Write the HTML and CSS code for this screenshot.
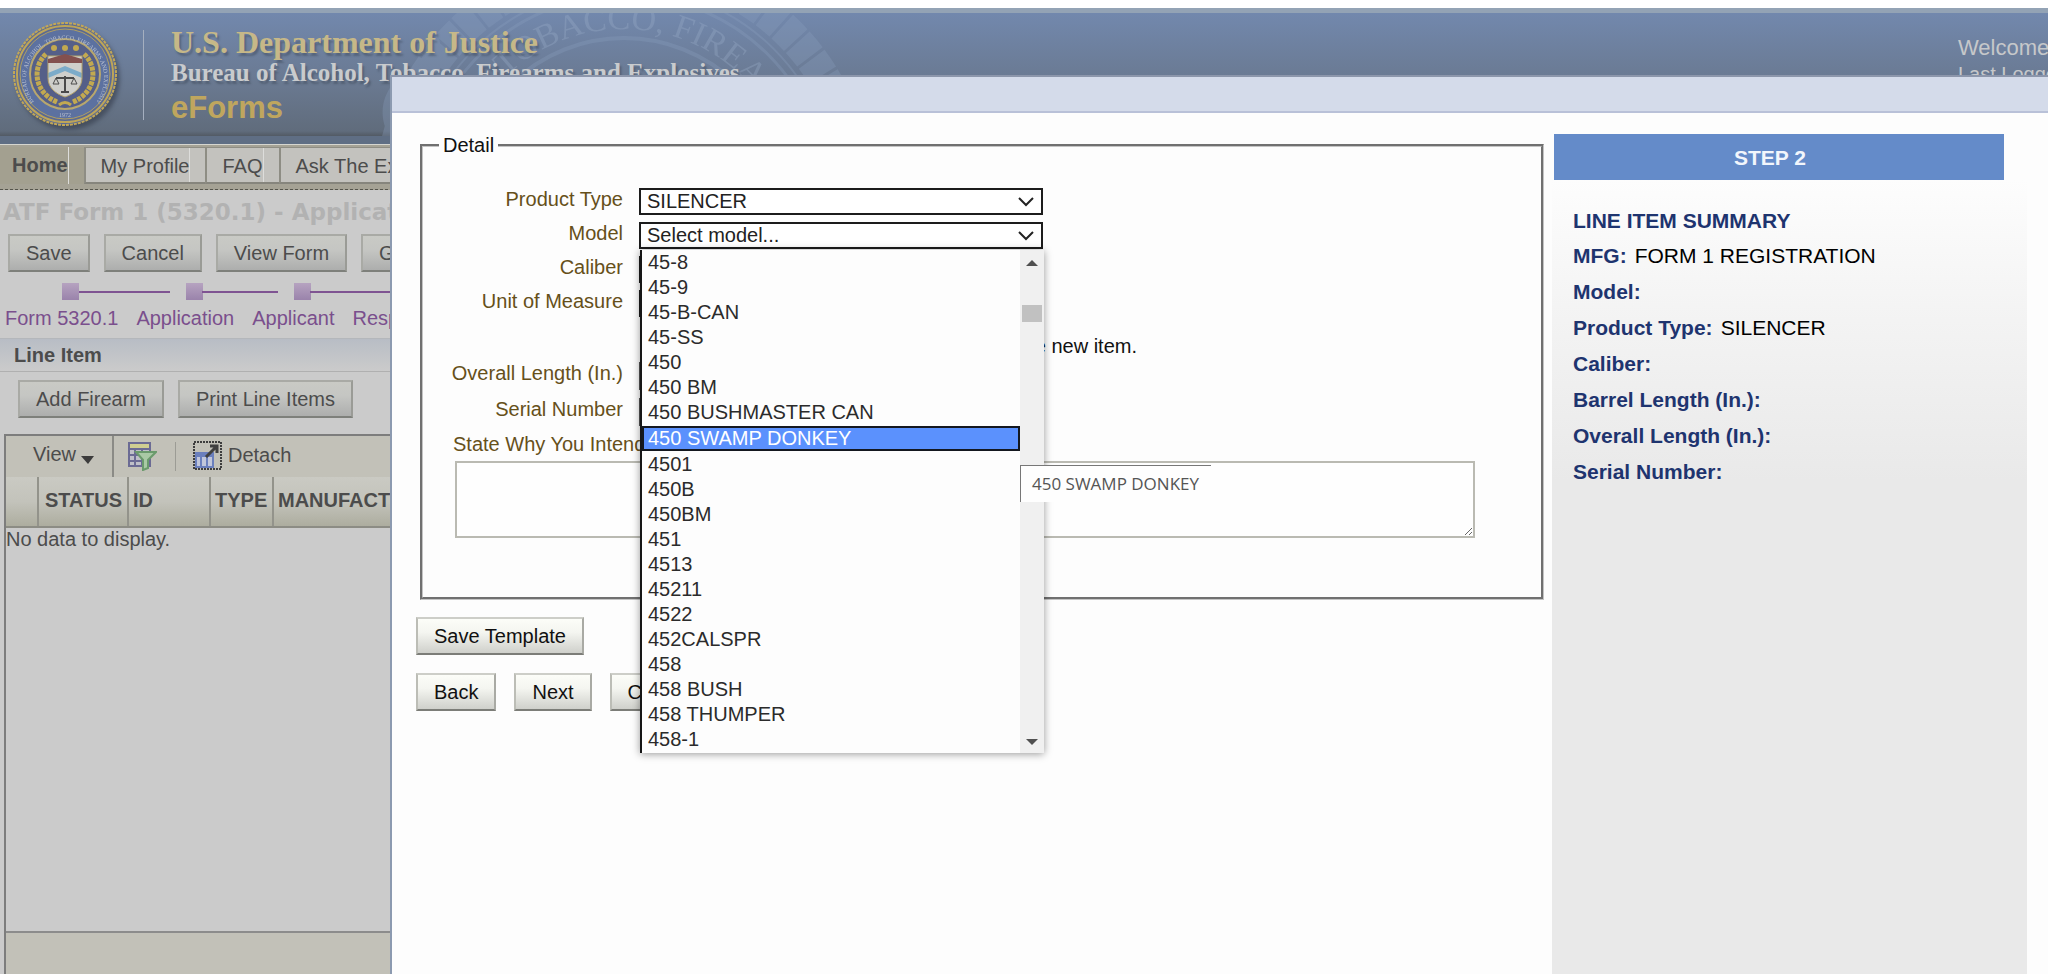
FILE: index.html
```html
<!DOCTYPE html>
<html lang="en">
<head>
<meta charset="UTF-8">
<meta name="viewport" content="width=device-width, initial-scale=1.0">
<title>ATF eForms - ATF Form 1 (5320.1)</title>
<link rel="stylesheet" href="styles.css">
</head>
<body>
<header class="banner">
    <svg class="watermark" width="560" height="124" viewBox="0 0 560 124" aria-hidden="true">
        <defs>
            <path id="ringText" d="M74 186 A170 170 0 0 1 414 186"/>
        </defs>
        <g fill="none" stroke="#8ba0bf">
            <circle cx="244" cy="186" r="161" stroke-width="4"/>
            <circle cx="244" cy="186" r="204" stroke-width="3"/>
            <circle cx="244" cy="186" r="212" stroke-width="2"/>
            <circle cx="244" cy="186" r="234" stroke-width="32" stroke-dasharray="19 3"/>
        </g>
        <path fill="#8ba0bf" d="M10 124 C-2 105 2 85 12 72 C22 92 28 108 24 124Z M38 92 C30 66 40 40 58 22 C66 48 60 74 38 92Z"/>
        <text class="ring-text"><textPath href="#ringText" startOffset="136">TOBACCO, FIREARMS</textPath></text>
    </svg>
    <svg class="seal" width="108" height="108" viewBox="0 0 108 108" role="img" aria-label="ATF seal">
        <defs>
            <path id="sealText" d="M23 82 A39 39 0 1 1 85 82"/>
            <clipPath id="shieldClip"><path d="M37 36H71V58C71 68 63 74 54 77C45 74 37 68 37 58Z"/></clipPath>
        </defs>
        <circle cx="54" cy="54" r="51" fill="#5c6b92" stroke="#c2a757" stroke-width="2" stroke-dasharray="3 1"/>
        <circle cx="54" cy="54" r="48" fill="#5b6992" stroke="#bda558" stroke-width="2"/>
        <circle cx="54" cy="54" r="45" fill="#5c71a0" stroke="#b09f62"/>
        <circle cx="54" cy="54" r="35" fill="#555f88" stroke="#b8a76d" stroke-width="2"/>
        <text class="seal-text"><textPath href="#sealText">BUREAU OF ALCOHOL, TOBACCO, FIREARMS AND EXPLOSIVES</textPath></text>
        <text class="seal-text" x="54" y="97" text-anchor="middle">1972</text>
        <g fill="none" stroke="#c2a950" stroke-width="5" stroke-dasharray="4 1">
            <path d="M35 34C20 48 24 73 46 82"/>
            <path d="M73 34C88 48 84 73 62 82"/>
        </g>
        <path d="M48 85q6 -5 12 0" fill="none" stroke="#c2a950" stroke-width="3"/>
        <g fill="#c2a950">
            <circle cx="43" cy="28" r="3"/><circle cx="54" cy="28" r="3"/><circle cx="65" cy="28" r="3"/>
        </g>
        <g clip-path="url(#shieldClip)">
            <path fill="#cfcfcb" d="M37 36h34v42H37z"/>
            <path fill="#7cabc9" d="M37 53L54 46L71 53V58L54 51L37 58Z"/>
        </g>
        <path d="M37 36H71V58C71 68 63 74 54 77C45 74 37 68 37 58Z" fill="none" stroke="#b3a269"/>
        <path d="M37 43V39L54 34L71 39V43Z" fill="#83504f"/>
        <path d="M45 58H63M54 56V71M50 72H58" fill="none" stroke="#4a4a4a" stroke-width="2"/>
        <path d="M45 58L42 64H48ZM63 58L60 64H66Z" fill="none" stroke="#4a4a4a"/>
    </svg>
    <div class="agency">
        <div class="department">U.S. Department of Justice</div>
        <div class="bureau">Bureau of Alcohol, Tobacco, Firearms and Explosives</div>
        <div class="eforms">eForms</div>
    </div>
    <div class="welcome">
        <div>Welcome</div>
        <div class="last-login">Last Logged</div>
    </div>
</header>

<nav class="tabs">
    <a class="tab active" href="#"><span>Home</span></a>
    <a class="tab" href="#"><span>My Profile</span></a>
    <a class="tab" href="#"><span>FAQ</span></a>
    <a class="tab" href="#"><span>Ask The Experts</span></a>
</nav>

<main class="page">
    <h1>ATF Form 1 (5320.1) - Application</h1>
    <div class="actions">
        <button type="button">Save</button>
        <button type="button">Cancel</button>
        <button type="button">View Form</button>
        <button type="button">Generate</button>
    </div>
    <ol class="train">
        <li><i class="stop"></i><a href="#">Form 5320.1</a></li>
        <li><i class="stop"></i><a href="#">Application</a></li>
        <li><i class="stop"></i><a href="#">Applicant</a></li>
        <li><i class="stop"></i><a href="#">Responsible</a></li>
    </ol>
    <h2>Line Item</h2>
    <div class="actions line-actions">
        <button type="button">Add Firearm</button>
        <button type="button">Print Line Items</button>
    </div>
    <section class="grid-panel">
        <div class="toolbar">
            <button type="button" class="view-menu">View
                <svg width="14" height="8" viewBox="0 0 14 8"><path d="M0 0H13L7 8Z" fill="#3c3c3c"/></svg>
            </button>
            <button type="button" class="icon-button" aria-label="Filter">
                <svg width="29" height="29" viewBox="0 0 29 29">
                    <path d="M1 1H22V24H1Z" fill="#bfc0c8" stroke="#6b6b94" stroke-width="2"/>
                    <path d="M2 2H21V6H2Z" fill="#cfce92"/>
                    <path d="M1 7H22M1 13H22M1 19H22M7 7V24M14 7V24" stroke="#6b6b94" stroke-width="2"/>
                    <path d="M8 10H28L20 18V26L15 28V18Z" fill="#a9c9a5" stroke="#6a9a6c" stroke-width="2"/>
                </svg>
            </button>
            <button type="button" class="icon-button detach">
                <svg width="29" height="29" viewBox="0 0 29 29">
                    <path d="M1 1H28V28H1Z" fill="none" stroke="#3d3d3d" stroke-width="2" stroke-dasharray="2 1"/>
                    <path d="M3 12H20V26H3Z" fill="#c0c6da" stroke="#6a7fbd" stroke-width="2"/>
                    <path d="M3 12H20V16H3Z" fill="#6a7fbd"/>
                    <path d="M8 16V26M14 16V26" stroke="#6a7fbd" stroke-width="2"/>
                    <path d="M13 16L23 6M17 5H24V12" fill="none" stroke="#404040" stroke-width="3"/>
                </svg>
                Detach
            </button>
        </div>
        <table>
            <colgroup><col class="c-sel"><col class="c-status"><col class="c-id"><col class="c-type"><col></colgroup>
            <thead>
                <tr><th></th><th class="status">STATUS</th><th>ID</th><th>TYPE</th><th>MANUFACTURER</th></tr>
            </thead>
            <tbody>
                <tr><td colspan="5">No data to display.</td></tr>
            </tbody>
        </table>
        <div class="panel-footer"></div>
    </section>
</main>

<div class="dialog" role="dialog" aria-label="Line item">
    <div class="dialog-title"></div>
    <div class="dialog-body">
        <form class="detail-form">
            <fieldset>
                <legend>Detail</legend>
                <div class="fields">
                    <label for="productType">Product Type</label>
                    <select id="productType"><option>SILENCER</option></select>
                    <label for="model">Model</label>
                    <div class="combo">
                        <select id="model"><option>Select model...</option></select>
                        <div class="dropdown">
                            <ul role="listbox" aria-label="Model">
                                <li role="option">45-8</li>
                                <li role="option">45-9</li>
                                <li role="option">45-B-CAN</li>
                                <li role="option">45-SS</li>
                                <li role="option">450</li>
                                <li role="option">450 BM</li>
                                <li role="option">450 BUSHMASTER CAN</li>
                                <li role="option" class="selected" aria-selected="true">450 SWAMP DONKEY</li>
                                <li role="option">4501</li>
                                <li role="option">450B</li>
                                <li role="option">450BM</li>
                                <li role="option">451</li>
                                <li role="option">4513</li>
                                <li role="option">45211</li>
                                <li role="option">4522</li>
                                <li role="option">452CALSPR</li>
                                <li role="option">458</li>
                                <li role="option">458 BUSH</li>
                                <li role="option">458 THUMPER</li>
                                <li role="option">458-1</li>
                            </ul>
                            <div class="scrollbar">
                                <svg width="12" height="6" viewBox="0 0 12 6"><path d="M0 6L6 0L12 6Z" fill="#505050"/></svg>
                                <div class="thumb"></div>
                                <svg width="12" height="6" viewBox="0 0 12 6"><path d="M0 0H12L6 6Z" fill="#505050"/></svg>
                            </div>
                            <div class="tooltip" role="tooltip">450 SWAMP DONKEY</div>
                        </div>
                    </div>
                    <label for="caliber">Caliber</label>
                    <select id="caliber"></select>
                    <label for="unit">Unit of Measure</label>
                    <select id="unit"></select>
                </div>
                <p class="note">Create the new item.</p>
                <div class="fields lengths">
                    <label for="overallLength">Overall Length (In.)</label>
                    <input type="text" id="overallLength">
                    <label for="serialNumber">Serial Number</label>
                    <input type="text" id="serialNumber">
                </div>
                <label class="reason-label" for="reason">State Why You Intend To Make Firearm</label>
                <textarea id="reason"></textarea>
            </fieldset>
            <div class="actions">
                <button type="button">Save Template</button>
            </div>
            <div class="actions">
                <button type="button">Back</button>
                <button type="button">Next</button>
                <button type="button">Cancel</button>
            </div>
        </form>
        <aside class="summary">
            <div class="step">STEP 2</div>
            <div class="summary-body">
                <h3>LINE ITEM SUMMARY</h3>
                <dl>
                    <div><dt>MFG:</dt><dd>FORM 1 REGISTRATION</dd></div>
                    <div><dt>Model:</dt></div>
                    <div><dt>Product Type:</dt><dd>SILENCER</dd></div>
                    <div><dt>Caliber:</dt></div>
                    <div><dt>Barrel Length (In.):</dt></div>
                    <div><dt>Overall Length (In.):</dt></div>
                    <div><dt>Serial Number:</dt></div>
                </dl>
            </div>
        </aside>
    </div>
</div>
</body>
</html>
```
FILE: styles.css
```css
* {
    box-sizing: border-box;
}
body {
    margin: 0;
    padding-top: 8px;
    height: 100vh;
    overflow: hidden;
    position: relative;
    display: flex;
    flex-direction: column;
    background-color: #fff;
    font-family: "Liberation Sans", Arial, sans-serif;
    font-size: 20px;
    line-height: 23px;
    color: #4c4c4c;
}
button, select, input, textarea {
    font: inherit;
    color: inherit;
}

/* Banner */
.banner {
    position: relative;
    flex: none;
    display: flex;
    height: 136px;
    overflow: hidden;
    border-top: 5px solid #93a3b5;
    border-bottom: 8px solid #5f6e84;
    background: linear-gradient(#7288ad, #69788f 60%, #606c7c 96%, #525a64);
}
.watermark {
    position: absolute;
    left: 380px;
    top: 0;
    opacity: 0.3;
}
.ring-text {
    font-family: "Liberation Serif", serif;
    font-size: 34px;
    fill: #9fb2cd;
}
.seal {
    position: relative;
    margin: 7px 0 0 11px;
    border-radius: 50%;
    filter: drop-shadow(3px 4px 2px rgba(40, 45, 60, 0.5));
}
.seal-text {
    font-family: "Liberation Serif", serif;
    font-size: 6px;
    fill: #b9c0cf;
}
.agency {
    position: relative;
    height: 90px;
    margin: 17px 0 0 24px;
    padding-left: 27px;
    border-left: 1px solid #a5afbf;
    font-family: "Liberation Serif", "Times New Roman", serif;
    font-weight: bold;
    white-space: nowrap;
    text-shadow: 2px 3px 2px rgba(50, 60, 75, 0.4);
}
.department {
    font-size: 32px;
    line-height: 24px;
    color: #c6b888;
}
.bureau {
    font-size: 25px;
    line-height: 38px;
    color: #c9cbcd;
}
.eforms {
    font-family: "Liberation Sans Narrow", "Liberation Sans", sans-serif;
    font-size: 31px;
    line-height: 32px;
    color: #bfa65e;
    text-shadow: none;
}
.welcome {
    width: 90px;
    margin: 20px 0 0 auto;
    font-size: 22px;
    line-height: 30px;
    color: #c6c8ca;
    white-space: nowrap;
}
.last-login {
    font-size: 20px;
    line-height: 23px;
}

/* Navigation tabs */
.tabs {
    flex: none;
    display: flex;
    height: 46px;
    padding-top: 2px;
    border-top: 1px solid #d5d5cf;
    border-bottom: 1px dashed #55544c;
    background-color: #a5a295;
}
.tab {
    display: flex;
    height: 37px;
    padding: 0 15px;
    border: 1px solid #8e8d84;
    border-left: 2px solid #8e8d84;
    border-right: none;
    border-bottom: 2px solid #86857d;
    background-color: #c3c2be;
    color: #4c4c4c;
    text-decoration: none;
    white-space: nowrap;
}
.tab span {
    line-height: 36px;
    border-right: 1px solid #dddddb;
}
.tab.active {
    padding-left: 12px;
    border: none;
    background-color: #a3a090;
    font-weight: bold;
}

/* Application page behind the dialog */
.page {
    flex: 1;
    display: flex;
    flex-direction: column;
    background-color: #cbcbcb;
}
h1 {
    margin: 9px 0 8px 3px;
    font-family: "DejaVu Sans", Verdana, sans-serif;
    font-size: 23px;
    line-height: 27px;
    color: #b2b2b2;
}
.actions {
    display: flex;
    gap: 15px;
}
.actions button {
    height: 38px;
    padding: 0 16px;
    border: 2px solid #a9aaa5;
    border-right-color: #9a9b96;
    border-bottom-color: #7e807b;
    background: linear-gradient(#c9cac5, #c5c6c3 40%, #adaead);
}
.page .actions {
    gap: 14px;
    padding-left: 8px;
}
.train {
    display: flex;
    margin: 11px 0 0;
    padding: 0 0 0 5px;
    list-style: none;
}
.train li {
    display: flex;
    flex-direction: column;
    gap: 7px;
}
.train a {
    padding-right: 18px;
    color: #7a4f8d;
    text-decoration: none;
}
/* each line leaves a square on its right and stops short of the next one */
.stop {
    display: flex;
    align-items: center;
    height: 17px;
    background: linear-gradient(#b6a3c0, #9a83ab) center / 17px 17px no-repeat;
}
.stop::before,
.stop::after {
    content: "";
    height: 2px;
    background-color: #7f5492;
}
.stop::before {
    flex: 0 0 calc(50% - 24px);
    margin-right: 32px;
}
.stop::after {
    flex: 1;
}
.train li:first-child .stop::before {
    background: none;
}
h2 {
    margin: 8px 0 0;
    padding: 5px 14px 4px;
    border-top: 1px solid #b4b7bb;
    border-bottom: 1px solid #b0b0b0;
    background: linear-gradient(#b8bdc5, #cbcbcb);
    font-size: 20px;
    line-height: 23px;
}
.page .line-actions {
    padding: 8px 0 0 18px;
}
.grid-panel {
    flex: 1;
    display: flex;
    flex-direction: column;
    margin: 16px 0 0 4px;
    border: 2px solid #7d7d7d;
    border-bottom: none;
}
.toolbar {
    display: flex;
    align-items: center;
    height: 41px;
    background-color: #c2c1b8;
}
.toolbar button {
    display: flex;
    align-items: center;
    padding: 0;
    border: none;
    background: none;
}
.toolbar .view-menu {
    align-self: stretch;
    width: 108px;
    padding: 0 0 4px 27px;
    gap: 5px;
    border-right: 2px solid #8b8b86;
}
.view-menu svg {
    margin-top: 10px;
}
.toolbar .icon-button {
    margin-left: 14px;
    padding-right: 18px;
    border-right: 1px solid #9c9c95;
}
.toolbar .detach {
    margin-left: 17px;
    padding-bottom: 2px;
    gap: 6px;
    border: none;
}
table {
    width: 100%;
    table-layout: fixed;
    border-collapse: collapse;
}
.c-sel { width: 32px; }
.c-status { width: 90px; }
.c-id { width: 82px; }
.c-type { width: 63px; }
th {
    height: 50px;
    padding: 0 0 2px 4px;
    border-right: 2px solid #93938b;
    border-bottom: 2px solid #8c8c84;
    background: linear-gradient(#cacac3, #c3c3bb 50%, #adad9f);
    text-align: left;
}
th.status {
    padding-left: 6px;
}
td {
    padding: 0;
}
.panel-footer {
    height: 43px;
    margin-top: auto;
    border-top: 2px solid #8c8c8c;
    background-color: #c2c1b8;
}

/* Line item dialog */
.dialog {
    position: absolute;
    left: 390px;
    top: 75px;
    right: 0;
    bottom: 0;
    display: flex;
    flex-direction: column;
    border-top: 2px solid #8c96ab;
    border-left: 2px solid #8c9ab0;
    background-color: #fdfdfd;
    color: #111;
}
.dialog-title {
    height: 36px;
    border-bottom: 2px solid #b9c1d8;
    background-color: #d4dbea;
}
.dialog-body {
    flex: 1;
    display: flex;
    padding: 21px 21px 0 24px;
}
.detail-form {
    flex: 1;
    min-width: 0;
}
fieldset {
    margin: 0 8px 17px 4px;
    padding: 31px 68px 59px 30px;
    border: 3px groove #c4c4c4;
}
legend {
    margin-left: -14px;
    padding: 0 4px;
}
.fields {
    display: grid;
    grid-template-columns: 170px 404px;
    column-gap: 16px;
    row-gap: 7px;
}
.lengths {
    row-gap: 8px;
}
label {
    color: #66501a;
}
.fields label {
    display: flex;
    justify-content: flex-end;
    white-space: nowrap;
}
select {
    appearance: none;
    display: block;
    width: 100%;
    height: 27px;
    padding: 0 6px;
    border: 2px solid #1c1c1c;
    border-radius: 0;
    background: #fff url("data:image/svg+xml,%3Csvg xmlns='http://www.w3.org/2000/svg' width='16' height='10'%3E%3Cpath d='M1 1L8 8L15 1' fill='none' stroke='%23222' stroke-width='2'/%3E%3C/svg%3E") right 7px center no-repeat;
    color: #222;
}
input[type="text"] {
    height: 28px;
    border: 2px solid #555;
}
.combo {
    position: relative;
}
.dropdown {
    position: absolute;
    z-index: 2;
    left: 1px;
    top: 28px;
    width: 404px;
    display: flex;
    border-left: 2px solid #161616;
    background-color: #fdfdfd;
    color: #2b2b2b;
    box-shadow: 0 1px 8px rgba(0, 0, 0, 0.4);
}
.dropdown ul {
    flex: 1;
    margin: 0;
    padding: 0 0 1px;
    list-style: none;
}
.dropdown li {
    height: 25px;
    padding-left: 6px;
    line-height: 25px;
}
.dropdown .selected {
    margin: 1px 0;
    padding-left: 4px;
    border: 2px solid #14181f;
    background-color: #5b91fd;
    color: #fff;
    line-height: 21px;
}
.scrollbar {
    display: flex;
    flex-direction: column;
    align-items: center;
    width: 24px;
    padding: 10px 0 8px;
    background-color: #f0f0f0;
}
.thumb {
    width: 20px;
    height: 17px;
    margin: 39px 0 auto;
    background-color: #c1c1c1;
}
.tooltip {
    position: absolute;
    left: 378px;
    top: 215px;
    height: 37px;
    padding: 0 12px 0 11px;
    border-top: 1px solid #777;
    border-left: 1px solid #777;
    background-color: #fefefe;
    color: #555;
    font-family: "Open Sans", "Noto Sans", sans-serif;
    font-size: 17px;
    line-height: 36px;
    white-space: nowrap;
}
.note {
    margin: 18px 0 4px;
    width: 684px;
    text-align: right;
}
.reason-label {
    display: block;
    margin: 7px 0 5px;
}
textarea {
    display: block;
    width: 100%;
    height: 77px;
    margin-left: 2px;
    border: 2px solid #babab2;
    background-color: #fefefe;
}
.dialog .actions {
    gap: 18px;
    margin-bottom: 18px;
}
.dialog .actions button {
    border-color: #cdcec8 #a9aaa4 #7c7d78 #bcbdb6;
    background: linear-gradient(#fcfdf8, #f4f5f0 40%, #cfd0cb);
}

/* Summary column */
.summary {
    flex: none;
    display: flex;
    flex-direction: column;
    width: 475px;
}
.step {
    margin: 0 23px 0 2px;
    padding: 2px 18px 0 0;
    background-color: #648bc9;
    color: #f2f6fc;
    font-size: 21px;
    font-weight: bold;
    line-height: 44px;
    text-align: center;
}
.summary-body {
    flex: 1;
    padding: 23px 21px;
    background: linear-gradient(#fdfdfd, #f3f3f3 140px, #e9e9e9 300px);
    font-size: 21px;
    line-height: 36px;
}
h3 {
    margin: 0;
    font-size: 21px;
    line-height: 35px;
    color: #1e346f;
}
dl {
    margin: 0;
}
dl div {
    display: flex;
    gap: 8px;
}
dt {
    font-weight: bold;
    color: #1e346f;
}
dd {
    margin: 0;
    color: #000;
}
```
